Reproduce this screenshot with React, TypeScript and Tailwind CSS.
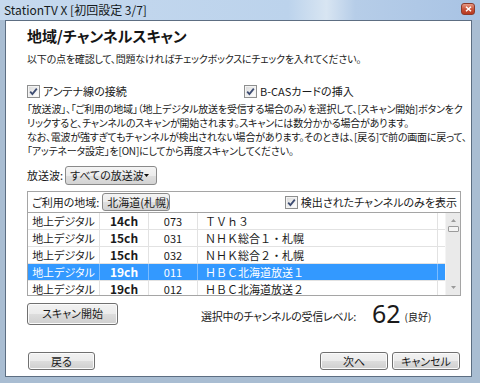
import type { ReactNode } from "react";

const jp = "font-['Noto_Sans_CJK_JP','Noto_Sans',sans-serif] [font-feature-settings:'palt']";

const rows = [
  { kind: "地上デジタル", ch: "14ch", id: "073", name: "ＴＶｈ３" },
  { kind: "地上デジタル", ch: "15ch", id: "031", name: "ＮＨＫ総合１・札幌" },
  { kind: "地上デジタル", ch: "15ch", id: "032", name: "ＮＨＫ総合２・札幌" },
  { kind: "地上デジタル", ch: "19ch", id: "011", name: "ＨＢＣ北海道放送１", selected: true },
  { kind: "地上デジタル", ch: "19ch", id: "012", name: "ＨＢＣ北海道放送２" },
];

function Check() {
  return (
    <span className="flex h-[13px] w-[13px] shrink-0 items-center justify-center border border-[#8e8f8f] bg-white">
      <span className="flex h-[11px] w-[11px] items-center justify-center border border-[#f4f4f4] bg-[linear-gradient(135deg,#dcdcdc,#ffffff)]">
        <svg width="9" height="9" viewBox="0 0 9 9">
          <path d="M1.2 4.6 L3.4 7 L7.8 1.6" fill="none" stroke="#3d4c72" strokeWidth="1.8" />
        </svg>
      </span>
    </span>
  );
}

function Btn({ children, className }: { children: ReactNode; className: string }) {
  return (
    <div
      className={`flex items-center justify-center whitespace-nowrap rounded-[3px] border border-[#707070] bg-[linear-gradient(#f2f2f2_0%,#ebebeb_50%,#dddddd_51%,#cfcfcf_100%)] text-[11px] text-[#1a1a1a] shadow-[inset_0_0_0_1px_#fbfbfb] ${className}`}
    >
      {children}
    </div>
  );
}

function Select({ label, className }: { label: string; className: string }) {
  return (
    <div
      className={`flex items-center justify-between whitespace-nowrap rounded-[3px] border border-[#8a8a8a] bg-[linear-gradient(#f4f4f4_0%,#ececec_50%,#dfdfdf_51%,#d3d3d3_100%)] pl-[4px] pr-[7px] text-[11px] text-[#1a1a1a] ${className}`}
    >
      <span>{label}</span>
      <svg width="5" height="3" viewBox="0 0 5 3">
        <path d="M0 0 H5 L2.5 3 Z" fill="#111" />
      </svg>
    </div>
  );
}

export default function App() {
  return (
    <div className={`flex h-[383px] w-[480px] flex-col bg-[#a9bdd2] ${jp}`}>
      {/* title bar */}
      <div className="flex h-[20px] shrink-0 items-center justify-between bg-[linear-gradient(90deg,#c6d9ee_0%,#bcd3ec_60%,#d8e5f2_68%,#b6cde8_74%,#a8c3e4_100%)] pl-[4px] pr-[5px]">
        <span className="text-[12px] leading-none text-[#151a20]">StationTV X [初回設定 3/7]</span>
        <span className="mt-[-2px] flex h-[12px] w-[14px] items-center justify-center rounded-[3px] border border-[#8b3a2c] bg-[linear-gradient(#e89a86,#c8543c_50%,#b8381f)]">
          <svg width="7" height="6" viewBox="0 0 7 6">
            <path d="M1 0.8 L6 5.2 M6 0.8 L1 5.2" stroke="#fff" strokeWidth="1.5" />
          </svg>
        </span>
      </div>

      {/* client */}
      <div className="mb-[6px] ml-[5px] mr-[8px] flex min-h-0 flex-1 flex-col border border-[#5d6e82] bg-white pl-[21px] pr-[10px] pt-[5px] text-[#1a1a1a]">
        <div className="h-[20px] text-[15px] font-bold leading-[20px] text-[#151515]">地域/チャンネルスキャン</div>
        <div className="mt-[5px] h-[16px] whitespace-nowrap text-[10px] leading-[16px] tracking-[-0.2px]">
          以下の点を確認して、問題なければチェックボックスにチェックを入れてください。
        </div>

        <div className="mt-[16px] flex h-[16px] items-center text-[11px]">
          <div className="flex w-[217px] items-center gap-[3px]">
            <Check />
            <span>アンテナ線の接続</span>
          </div>
          <div className="flex items-center gap-[3px]">
            <Check />
            <span>B-CASカードの挿入</span>
          </div>
        </div>

        <div className="mt-[3px] whitespace-nowrap text-[10px] leading-[14px] tracking-[-0.2px]">
          <p>「放送波」、「ご利用の地域」（地上デジタル放送を受信する場合のみ）を選択して、[スキャン開始]ボタンをク</p>
          <p>リックすると、チャンネルのスキャンが開始されます。スキャンには数分かかる場合があります。</p>
          <p>なお、電波が強すぎてもチャンネルが検出されない場合があります。そのときは、[戻る]で前の画面に戻って、</p>
          <p>「アッテネータ設定」を[ON]にしてから再度スキャンしてください。</p>
        </div>

        <div className="mt-[8px] flex h-[19px] items-center gap-[2px] text-[11px]">
          <span>放送波:</span>
          <Select label="すべての放送波" className="h-[19px] w-[92px]" />
        </div>

        {/* group box */}
        <div className="mt-[6px] flex w-[434px] flex-col border border-[#a5a5a5]">
          <div className="flex h-[21px] items-center justify-between border-b border-[#a5a5a5] pl-[4px] pr-[3px] text-[11px]">
            <div className="flex items-center gap-[3px]">
              <span>ご利用の地域:</span>
              <Select label="北海道(札幌)" className="h-[18px] w-[68px]" />
            </div>
            <div className="flex items-center gap-[3px]">
              <Check />
              <span>検出されたチャンネルのみを表示</span>
            </div>
          </div>
          <div className="flex h-[82px] overflow-hidden">
            <div className="flex flex-col">
              {rows.map((r, i) => (
                <div
                  key={r.id}
                  className={`flex h-[16px] shrink-0 items-center text-[11px] leading-none ${i > 0 ? "h-[17px] border-t border-[#e2e2e2]" : ""} ${r.selected ? "bg-[#3399ff] text-white" : ""}`}
                >
                  <span className={`flex h-full w-[72px] items-center justify-center border-r ${r.selected ? "border-[#7cbcff]" : "border-[#e2e2e2]"}`}>{r.kind}</span>
                  <span className={`flex h-full w-[49px] items-center justify-center border-r text-[12px] font-bold ${r.selected ? "border-[#7cbcff]" : "border-[#e2e2e2]"}`}>{r.ch}</span>
                  <span className={`flex h-full w-[49px] items-center justify-center border-r ${r.selected ? "border-[#7cbcff]" : "border-[#e2e2e2]"}`}>{r.id}</span>
                  <span className={`flex h-full w-[240px] items-center border-r pl-[7px] [font-feature-settings:normal] ${r.selected ? "border-[#7cbcff]" : "border-[#e2e2e2]"}`}>{r.name}</span>
                  <span className="h-full w-[7px]" />
                </div>
              ))}
            </div>
            {/* scrollbar */}
            <div className="flex w-[15px] flex-col items-center border-l border-[#f4f4f4] bg-[#eaeaea]">
              <svg className="mt-[6px]" width="5" height="3" viewBox="0 0 5 3">
                <path d="M0 3 H5 L2.5 0 Z" fill="#9a9a9a" />
              </svg>
              <div className="mt-[4px] h-[6px] w-[11px] rounded-[1px] border border-[#9b9b9b] bg-[#f4f4f4]" />
              <div className="flex-1" />
              <svg className="mb-[6px]" width="5" height="3" viewBox="0 0 5 3">
                <path d="M0 0 H5 L2.5 3 Z" fill="#9a9a9a" />
              </svg>
            </div>
          </div>
        </div>

        <div className="mt-[5px] flex items-center">
          <Btn className="h-[22px] w-[91px]">スキャン開始</Btn>
          <span className="ml-[83px] mt-[6px] text-[11px] tracking-[-0.3px]">選択中のチャンネルの受信レベル:</span>
          <span className="ml-[16px] font-['Noto_Sans',sans-serif] text-[25px] leading-none text-[#1a1a1a]">62</span>
          <span className="ml-[4px] mt-[6px] text-[10px]">(良好)</span>
        </div>

        <div className="mb-[6px] mt-auto flex items-center">
          <Btn className="ml-[1px] h-[18px] w-[67px]">戻る</Btn>
          <div className="flex-1" />
          <Btn className="h-[18px] w-[68px]">次へ</Btn>
          <Btn className="ml-[4px] mr-[1px] h-[18px] w-[68px]">キャンセル</Btn>
        </div>
      </div>
    </div>
  );
}
